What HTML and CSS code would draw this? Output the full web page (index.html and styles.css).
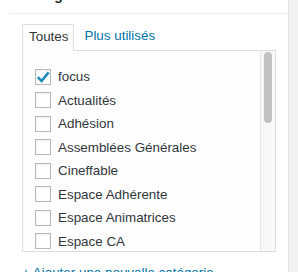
FILE: index.html
```html
<!DOCTYPE html>
<html>
<head>
    <meta charset="utf-8">
    <link rel="stylesheet" href="styles.css">
</head>
<body>
    <div class="page">
        <div class="postbox">
            <h2 class="hndle">Catégories</h2>

            <div class="inside">
                <ul class="category-tabs">
                    <li class="tab tab-active">Toutes</li>
                    <li class="tab"><a href="#">Plus utilisés</a></li>
                </ul>

                <div class="tabs-panel">
                    <ul class="categorychecklist">
                        <li>
                            <span class="checkbox checked">
                                <svg width="16" height="16" viewBox="0 0 16 16">
                                    <path d="M2.8 8.2 L6.6 12 L13.6 3.4" fill="none" stroke="#1e8cbe" stroke-width="2.6"/>
                                </svg>
                            </span>
                            focus
                        </li>
                        <li><span class="checkbox"></span>Actualités</li>
                        <li><span class="checkbox"></span>Adhésion</li>
                        <li><span class="checkbox"></span>Assemblées Générales</li>
                        <li><span class="checkbox"></span>Cineffable</li>
                        <li><span class="checkbox"></span>Espace Adhérente</li>
                        <li><span class="checkbox"></span>Espace Animatrices</li>
                        <li><span class="checkbox"></span>Espace CA</li>
                        <li><span class="checkbox"></span>Espace Communication</li>
                        <li><span class="checkbox"></span>Festival</li>
                    </ul>
                    <div class="scrollbar">
                        <div class="scrollbar-thumb"></div>
                    </div>
                </div>

                <a class="add-link" href="#">+ Ajouter une nouvelle catégorie</a>
            </div>
        </div>
        <div class="sidebar-gap"></div>
    </div>
</body>
</html>
```

FILE: styles.css
```css
body {
    margin: 0;
    font-family: "Liberation Sans", Arial, sans-serif;
    font-size: 13.4px;
    color: #32373c;
    background: #fff;
    overflow: hidden;
}

.page {
    display: flex;
    height: 272px;
    overflow: hidden;
}

.postbox {
    width: 278px;
    margin-left: 10px;
    margin-top: -23px;
    background: #fff;
    border-right: 1px solid #e5e5e5;
}

.sidebar-gap {
    flex: 1;
    background: #f1f1f1;
}

.hndle {
    margin: 0;
    padding: 8px 14px;
    font-size: 14px;
    font-weight: 600;
    line-height: 20px;
    color: #23282d;
    border-bottom: 1px solid #eee;
}

.inside {
    padding: 0 12px;
}

.category-tabs {
    display: flex;
    align-items: flex-end;
    margin: 10px 0 0 0;
    padding: 0;
    list-style: none;
}

.tab {
    padding: 0 5px 0 6px;
    height: 26px;
    line-height: 24px;
}

.tab a {
    color: #0073aa;
    text-decoration: none;
    margin-left: 4px;
}

.tab-active {
    border: 1px solid #ddd;
    border-bottom: none;
    background: #fdfdfd;
    margin-bottom: -1px;
    position: relative;
}

.tabs-panel {
    display: flex;
    height: 200px;
    border: 1px solid #ddd;
    background: #fdfdfd;
}

.categorychecklist {
    flex: 1;
    margin: 0;
    padding: 14px 0 0 12px;
    list-style: none;
    overflow: hidden;
}

.categorychecklist li {
    display: flex;
    align-items: center;
    gap: 7px;
    height: 23.5px;
    white-space: nowrap;
}

.checkbox {
    display: block;
    width: 14px;
    height: 14px;
    border: 1px solid #b4b9be;
    background: #fff;
    box-shadow: inset 0 1px 2px rgba(0, 0, 0, 0.07);
    flex-shrink: 0;
}

.checkbox svg {
    display: block;
    margin: -1px;
}

.scrollbar {
    width: 14px;
    border-left: 1px solid #e8e8e8;
    background: linear-gradient(90deg, #f6f6f6 0%, #fafafa 100%);
}

.scrollbar-thumb {
    width: 8px;
    height: 71px;
    margin: 1px 0 0 3px;
    border-radius: 4px;
    background: #c1c1c1;
}

.add-link {
    display: inline-block;
    margin-top: 11px;
    line-height: 19px;
    color: #0073aa;
    text-decoration: underline;
}
```
